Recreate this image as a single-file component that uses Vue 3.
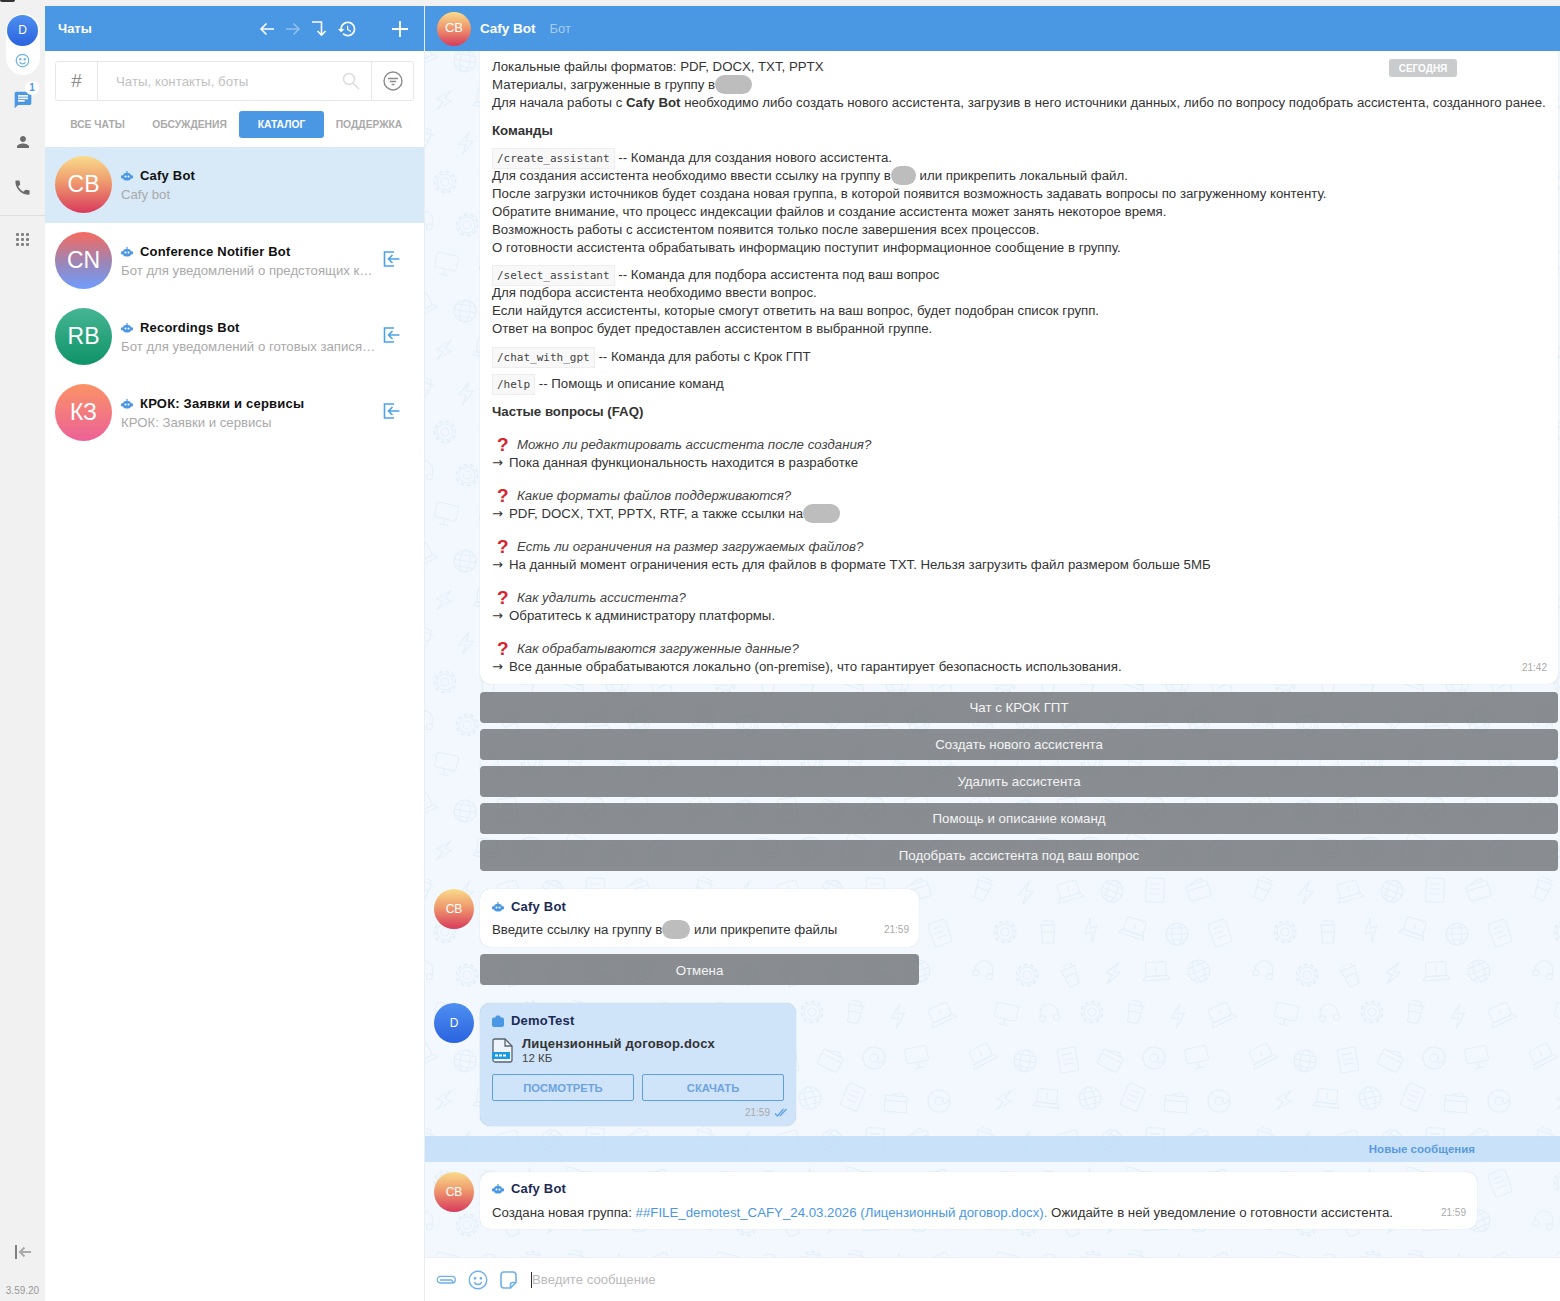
<script setup>
const tabs = [
  { label: "Все чаты" },
  { label: "Обсуждения" },
  { label: "Каталог", active: true },
  { label: "Поддержка" },
];

const chats = [
  { id: 1, initials: "CB", name: "Cafy Bot", sub: "Cafy bot", grad: "grad-cb", active: true },
  { id: 2, initials: "CN", name: "Conference Notifier Bot", sub: "Бот для уведомлений о предстоящих к…", grad: "grad-cn" },
  { id: 3, initials: "RB", name: "Recordings Bot", sub: "Бот для уведомлений о готовых запися…", grad: "grad-rb" },
  { id: 4, initials: "КЗ", name: "КРОК: Заявки и сервисы", sub: "КРОК: Заявки и сервисы", grad: "grad-kz" },
];

const faq = [
  { q: "Можно ли редактировать ассистента после создания?", a: "Пока данная функциональность находится в разработке" },
  { q: "Какие форматы файлов поддерживаются?", a: "PDF, DOCX, TXT, PPTX, RTF, а также ссылки на", pill: true },
  { q: "Есть ли ограничения на размер загружаемых файлов?", a: "На данный момент ограничения есть для файлов в формате TXT. Нельзя загрузить файл размером больше 5МБ" },
  { q: "Как удалить ассистента?", a: "Обратитесь к администратору платформы." },
  { q: "Как обрабатываются загруженные данные?", a: "Все данные обрабатываются локально (on-premise), что гарантирует безопасность использования." },
];

const buttons = [
  "Чат с КРОК ГПТ",
  "Создать нового ассистента",
  "Удалить ассистента",
  "Помощь и описание команд",
  "Подобрать ассистента под ваш вопрос",
];

// фон чата: раскладываем значки по сетке с небольшим разбросом
const doodleNames = ["laptop", "gear", "at", "globe", "cup", "screen", "note", "bolt", "headset", "wallet"];
const doodles = [];
for (let row = 0; row < 6; row++) {
  for (let col = 0; col < 6; col++) {
    const x = 4 + col * 43 + (row % 2) * 18 + ((col * 7 + row * 11) % 7);
    const y = 4 + row * 41 + ((col * 5 + row * 3) % 6);
    const angle = ((col * 37 + row * 53) % 56) - 28;
    const name = doodleNames[(col * 3 + row * 7) % doodleNames.length];
    doodles.push({ id: `${row}-${col}`, href: `#d-${name}`, transform: `translate(${x} ${y}) rotate(${angle} 13 13)` });
  }
}
</script>

<template>
  <div class="page">
    <div class="topstrip"><span class="topmark"></span></div>
    <div class="layout">
      <!-- левая полоса -->
      <nav class="rail">
        <div class="me">
          <div class="me-ava">D</div>
          <svg class="me-smile" width="15" height="15" viewBox="0 0 24 24" fill="none" stroke="#6fb0ea" stroke-width="2">
            <circle cx="12" cy="12" r="10" />
            <circle cx="8.5" cy="10" r="1" fill="#6fb0ea" />
            <circle cx="15.5" cy="10" r="1" fill="#6fb0ea" />
            <path d="M7.5 14.5c1 2 2.7 3 4.5 3s3.5-1 4.5-3" />
          </svg>
        </div>
        <div class="rail-item rail-chat">
          <svg width="20" height="20" viewBox="0 0 24 24" fill="#4a97e3">
            <path d="M20 2H4c-1.100 0-2 .9-2 2v18l4-4h14c1.100 0 2-.9 2-2V4c0-1.100-.9-2-2-2zM6 9h12v2H6V9zm8 5H6v-2h8v2zm4-6H6V6h12v2z" />
          </svg>
          <span class="rail-badge">1</span>
        </div>
        <div class="rail-item rail-person">
          <svg width="18" height="18" viewBox="0 0 24 24" fill="#6b6b6b">
            <path d="M12 12c2.210 0 4-1.790 4-4s-1.790-4-4-4-4 1.790-4 4 1.790 4 4 4zm0 2c-2.670 0-8 1.340-8 4v2h16v-2c0-2.660-5.330-4-8-4z" />
          </svg>
        </div>
        <div class="rail-item rail-phone">
          <svg width="19" height="19" viewBox="0 0 24 24" fill="#6b6b6b">
            <path d="M6.620 10.790c1.440 2.830 3.760 5.140 6.590 6.590l2.200-2.200c.27-.27.67-.36 1.020-.24 1.120.37 2.330.57 3.570.57.55 0 1 .45 1 1V20c0 .55-.45 1-1 1-9.390 0-17-7.610-17-17 0-.55.45-1 1-1h3.500c.55 0 1 .45 1 1 0 1.250.2 2.450.57 3.570.11.35.03.74-.25 1.020l-2.200 2.200z" />
          </svg>
        </div>
        <div class="rail-line"></div>
        <div class="rail-grid">
          <i v-for="n in 9" :key="n"></i>
        </div>
        <div class="rail-spacer"></div>
        <svg class="rail-collapse" width="18" height="14" viewBox="0 0 18 14" fill="none" stroke="#aaa" stroke-width="2">
          <path d="M2 0v14" stroke="#808080" />
          <path d="M17 7H6M10.500 2.500 6 7l4.500 4.500" />
        </svg>
        <div class="version">3.59.20</div>
      </nav>

      <!-- список чатов -->
      <aside class="side">
        <header class="side-head">
          <span class="side-title">Чаты</span>
          <div class="side-tools">
            <svg width="16" height="14" viewBox="0 0 16 14" fill="none" stroke="#fff" stroke-width="1.600">
              <path d="M15 7H2M7.500 1.500 2 7l5.500 5.500" />
            </svg>
            <svg width="16" height="14" viewBox="0 0 16 14" fill="none" stroke="#8fc0ee" stroke-width="1.600">
              <path d="M1 7h13M8.500 1.500 14 7l-5.500 5.500" />
            </svg>
            <svg width="16" height="17" viewBox="0 0 16 17" fill="none" stroke="#fff" stroke-width="1.600">
              <path d="M1 2h9.500v13M6.500 11l4 4.200 4-4.200" />
            </svg>
            <svg width="20" height="20" viewBox="0 0 24 24" fill="#fff">
              <path d="M13 3c-4.970 0-9 4.030-9 9H1l3.890 3.890.07.14L9 12H6c0-3.870 3.130-7 7-7s7 3.130 7 7-3.130 7-7 7c-1.930 0-3.680-.79-4.940-2.060l-1.420 1.420C8.270 19.990 10.510 21 13 21c4.970 0 9-4.030 9-9s-4.030-9-9-9zm-1 5v5l4.280 2.540.72-1.210-3.500-2.080V8H12z" />
            </svg>
            <svg class="tool-plus" width="16" height="16" viewBox="0 0 16 16" fill="none" stroke="#fff" stroke-width="1.800">
              <path d="M8 0v16M0 8h16" />
            </svg>
          </div>
        </header>

        <div class="search">
          <div class="search-hash">#</div>
          <div class="search-field">
            <span class="search-ph">Чаты, контакты, боты</span>
            <svg width="18" height="18" viewBox="0 0 18 18" fill="none" stroke="#dcdcdc" stroke-width="1.500">
              <circle cx="7" cy="7" r="5.500" />
              <path d="m11 11 6 6" />
            </svg>
          </div>
          <div class="search-filter">
            <svg width="20" height="20" viewBox="0 0 20 20" fill="none" stroke="#8c8c8c" stroke-width="1.400">
              <circle cx="10" cy="10" r="9" />
              <path d="M5 7.500h10M6.800 10.500h6.400M8.600 13.500h2.800" />
            </svg>
          </div>
        </div>

        <div class="tabs">
          <span v-for="t in tabs" :key="t.label" class="tab" :class="{ on: t.active }">{{ t.label }}</span>
        </div>

        <div class="chatlist">
          <div v-for="c in chats" :key="c.id" class="chat" :class="{ on: c.active }">
            <div class="chat-ava" :class="c.grad">{{ c.initials }}</div>
            <div class="chat-body">
              <div class="chat-name">
                <svg class="bot" width="12" height="10" viewBox="0 0 12 10">
                  <use href="#bot-head" />
                </svg>
                <span>{{ c.name }}</span>
              </div>
              <div class="chat-sub">{{ c.sub }}</div>
            </div>
            <svg v-if="!c.active" class="chat-join" width="17" height="16" viewBox="0 0 17 16" fill="none" stroke="#4aa3e8" stroke-width="1.600">
              <path d="M11 1H1.500v14H11M16.500 8H5.500M9.500 4 5.500 8l4 4" />
            </svg>
          </div>
        </div>
      </aside>

      <!-- чат -->
      <main class="conv">
        <header class="conv-head">
          <div class="ava ava-small grad-cb">CB</div>
          <span class="conv-name">Cafy Bot</span>
          <span class="conv-status">Бот</span>
        </header>

        <div class="feed">
          <svg class="doodles" width="100%" height="100%">
            <defs>
              <g id="bot-head">
                <rect x="2" y="2" width="8" height="7.500" rx="3" fill="#4a97e3" />
                <rect x="0" y="4.200" width="2.500" height="3.200" rx="1" fill="#4a97e3" />
                <rect x="9.500" y="4.200" width="2.500" height="3.200" rx="1" fill="#4a97e3" />
                <rect x="5.400" y="0" width="1.200" height="3" fill="#4a97e3" />
                <circle cx="4.500" cy="5.500" r="1" fill="#fff" />
                <circle cx="7.500" cy="5.500" r="1" fill="#fff" />
              </g>
              <g id="d-laptop"><rect x="3" y="3" width="20" height="14" rx="2" /><path d="M0 21h26l-2-4H2zM13 7v6" /></g>
              <g id="d-gear"><circle cx="13" cy="13" r="4" /><circle cx="13" cy="13" r="8" /><circle cx="13" cy="13" r="10.500" stroke-dasharray="4 2.600" stroke-width="2" /></g>
              <g id="d-at"><circle cx="13" cy="13" r="11" /><circle cx="13" cy="13" r="4" /><path d="M17 9v6c0 3 5 3 5-2" /></g>
              <g id="d-globe"><circle cx="13" cy="13" r="11" /><ellipse cx="13" cy="13" rx="5" ry="11" /><path d="M2 13h22M4 7h18M4 19h18" /></g>
              <g id="d-cup"><path d="M6 7h14l-2 18H8zM4 7h18M8 3h10v4M7 14h12" /></g>
              <g id="d-screen"><rect x="2" y="3" width="22" height="15" rx="2" /><path d="M8 24h10M13 18v6" /></g>
              <g id="d-note"><rect x="4" y="1" width="18" height="24" rx="2" /><path d="M8 7h10M8 12h10M8 17h10" /></g>
              <g id="d-bolt"><path d="M16 1 6 15h7l-3 10 10-14h-7z" /></g>
              <g id="d-headset"><path d="M4 15v-2a9 9 0 0 1 18 0v2" /><circle cx="6" cy="18" r="3" /><circle cx="20" cy="18" r="3" /></g>
              <g id="d-wallet"><rect x="2" y="7" width="22" height="16" rx="2" /><path d="M2 12h22M6 7l12-4 2 4" /></g>
              <pattern id="doodle" x="-20" y="-12" width="280" height="250" patternUnits="userSpaceOnUse">
                <g fill="none" stroke="#e4eff9" stroke-width="1">
                  <use v-for="d in doodles" :key="d.id" :href="d.href" :transform="d.transform" />
                </g>
              </pattern>
            </defs>
            <rect width="100%" height="100%" fill="url(#doodle)" />
          </svg>

          <span class="today">СЕГОДНЯ</span>

          <div class="bubble bubble-main">
            <p>
              Локальные файлы форматов: PDF, DOCX, TXT, PPTX<br />
              Материалы, загруженные в группу в<span class="blur w37"></span><br />
              Для начала работы с <b>Cafy Bot</b> необходимо либо создать нового ассистента, загрузив в него источники данных, либо по вопросу подобрать ассистента, созданного ранее.
            </p>
            <p class="cmd-title"><b>Команды</b></p>
            <p>
              <code>/create_assistant</code> -- Команда для создания нового ассистента.<br />
              Для создания ассистента необходимо ввести ссылку на группу в<span class="blur w25"></span> или прикрепить локальный файл.<br />
              После загрузки источников будет создана новая группа, в которой появится возможность задавать вопросы по загруженному контенту.<br />
              Обратите внимание, что процесс индексации файлов и создание ассистента может занять некоторое время.<br />
              Возможность работы с ассистентом появится только после завершения всех процессов.<br />
              О готовности ассистента обрабатывать информацию поступит информационное сообщение в группу.
            </p>
            <p>
              <code>/select_assistant</code> -- Команда для подбора ассистента под ваш вопрос<br />
              Для подбора ассистента необходимо ввести вопрос.<br />
              Если найдутся ассистенты, которые смогут ответить на ваш вопрос, будет подобран список групп.<br />
              Ответ на вопрос будет предоставлен ассистентом в выбранной группе.
            </p>
            <p><code>/chat_with_gpt</code> -- Команда для работы с Крок ГПТ</p>
            <p><code>/help</code> -- Помощь и описание команд</p>
            <p class="faq-title"><b>Частые вопросы (FAQ)</b></p>
            <div v-for="item in faq" :key="item.q" class="faq">
              <div class="faq-q"><span class="faq-mark">?</span><em>{{ item.q }}</em></div>
              <div><span class="faq-arrow">→</span>{{ item.a }}<span v-if="item.pill" class="blur w37"></span></div>
            </div>
            <span class="time time-main">21:42</span>
          </div>

          <div class="kb">
            <button v-for="b in buttons" :key="b" class="kb-btn">{{ b }}</button>
          </div>

          <div class="msg msg-first">
            <div class="ava grad-cb">CB</div>
            <div class="bubble bubble-short">
              <div class="author">
                <svg width="12" height="10" viewBox="0 0 12 10"><use href="#bot-head" /></svg>
                Cafy Bot
              </div>
              <div class="text-row">
                <span>Введите ссылку на группу в<span class="blur w28"></span> или прикрепите файлы</span>
                <span class="time">21:59</span>
              </div>
            </div>
          </div>
          <button class="kb-btn cancel">Отмена</button>

          <div class="msg msg-file">
            <div class="ava grad-d">D</div>
            <div class="bubble bubble-file">
              <div class="author">
                <svg width="12" height="12" viewBox="0 0 12 12" fill="#4a97e3">
                  <path d="M2 2.500h1.500V2A1.500 1.500 0 0 1 5 .5h2A1.500 1.500 0 0 1 8.500 2v.5H10a2 2 0 0 1 2 2V10a2 2 0 0 1-2 2H2a2 2 0 0 1-2-2V4.500a2 2 0 0 1 2-2z" />
                </svg>
                DemoTest
              </div>
              <div class="file">
                <svg width="21" height="25" viewBox="0 0 21 25" fill="none">
                  <path d="M1 3a2 2 0 0 1 2-2h10l7 7v14a2 2 0 0 1-2 2H3a2 2 0 0 1-2-2z" fill="#eef4fb" stroke="#5b6470" stroke-width="1.300" />
                  <path d="M13 1v7h7" stroke="#5b6470" stroke-width="1.300" />
                  <rect x="0" y="14" width="18" height="7" fill="#1e9ae0" />
                  <path d="M3 17.500h12" stroke="#fff" stroke-width="2" stroke-dasharray="3 1" />
                </svg>
                <div>
                  <div class="file-name">Лицензионный договор.docx</div>
                  <div class="file-size">12 КБ</div>
                </div>
              </div>
              <div class="file-btns">
                <button class="file-btn">Посмотреть</button>
                <button class="file-btn">Скачать</button>
              </div>
              <div class="file-meta">
                <span class="time">21:59</span>
                <svg width="14" height="9" viewBox="0 0 14 9" fill="none" stroke="#5fa0e2" stroke-width="1.200">
                  <path d="M1 5.500 3.500 8 9.500 1M6 8l6.500-7" />
                </svg>
              </div>
            </div>
          </div>

          <div class="newbar"><span>Новые сообщения</span></div>

          <div class="msg">
            <div class="ava grad-cb">CB</div>
            <div class="bubble bubble-last">
              <div class="author">
                <svg width="12" height="10" viewBox="0 0 12 10"><use href="#bot-head" /></svg>
                Cafy Bot
              </div>
              <div class="text-row">
                <span>Создана новая группа: <a>##FILE_demotest_CAFY_24.03.2026 (Лицензионный договор.docx).</a> Ожидайте в ней уведомление о готовности ассистента.</span>
                <span class="time">21:59</span>
              </div>
            </div>
          </div>
        </div>

        <footer class="composer">
          <svg width="20" height="10" viewBox="0 0 20 10" fill="none" stroke="#6fb0ea" stroke-width="1.300">
            <path d="M4 5h11a1.500 1.500 0 0 1 0 3H4.500a3.300 3.300 0 0 1 0-6.600H16a3.300 3.300 0 0 1 0 6.600" />
          </svg>
          <svg width="20" height="20" viewBox="0 0 24 24" fill="none" stroke="#6fb0ea" stroke-width="1.700">
            <circle cx="12" cy="12" r="10.500" />
            <circle cx="8.500" cy="10" r=".8" fill="#6fb0ea" />
            <circle cx="15.500" cy="10" r=".8" fill="#6fb0ea" />
            <path d="M7.500 14.500c1 2 2.700 3 4.500 3s3.500-1 4.500-3" />
          </svg>
          <svg width="17" height="18" viewBox="0 0 17 18" fill="none" stroke="#6fb0ea" stroke-width="1.600">
            <path d="M10.500 17H4a3 3 0 0 1-3-3V4a3 3 0 0 1 3-3h9a3 3 0 0 1 3 3v7.500zM10.500 17v-3.500a2 2 0 0 1 2-2H16" />
          </svg>
          <div class="composer-ph"><i class="caret"></i>Введите сообщение</div>
        </footer>
      </main>
    </div>
  </div>
</template>

<style scoped>
.page {
  width: 1560px;
  height: 1301px;
  overflow: hidden;
  display: flex;
  flex-direction: column;
  background: #f1f1f1;
  font-family: "Liberation Sans", Arial, sans-serif;
  font-size: 13.26px;
  color: #333;
}
.topstrip {
  height: 6px;
  flex: none;
}
.topmark {
  display: block;
  width: 15px;
  height: 2px;
  background: #333;
  border-radius: 0 0 4px 4px;
}
.layout {
  flex: 1;
  min-height: 0;
  display: flex;
}

/* левая полоса */
.rail {
  width: 45px;
  flex: none;
  display: flex;
  flex-direction: column;
  align-items: center;
  background: #f1f1f1;
}
.me {
  width: 34px;
  height: 61px;
  margin-top: 8px;
  background: #fff;
  border-radius: 17px;
  display: flex;
  flex-direction: column;
  align-items: center;
}
.me-ava {
  width: 31px;
  height: 31px;
  margin-top: 1px;
  border-radius: 50%;
  background: linear-gradient(#4f8ff0, #2a63e0);
  color: #fff;
  font-size: 12px;
  line-height: 31px;
  text-align: center;
}
.me-smile {
  margin-top: 7px;
}
.rail-item {
  height: 42px;
  width: 100%;
  display: flex;
  align-items: center;
  justify-content: center;
  position: relative;
}
.rail-chat {
  margin-top: 4px;
}
.rail-phone {
  margin-top: 3px;
}
.rail-badge {
  position: absolute;
  top: 2px;
  right: 6px;
  width: 14px;
  height: 14px;
  border-radius: 50%;
  background: #fff;
  color: #4a97e3;
  font-size: 10px;
  font-weight: 700;
  line-height: 14px;
  text-align: center;
}
.rail-line {
  width: 100%;
  height: 1px;
  background: #dedede;
  margin-top: 7px;
}
.rail-grid {
  display: grid;
  grid-template-columns: repeat(3, 3px);
  gap: 2px;
  margin-top: 17px;
}
.rail-grid i {
  width: 3px;
  height: 3px;
  background: #808080;
  border-radius: 1px;
}
.rail-spacer {
  flex: 1;
}
.rail-collapse {
  margin-bottom: 26px;
}
.version {
  font-size: 10px;
  color: #999;
  margin-bottom: 5px;
}

/* список чатов */
.side {
  width: 379px;
  flex: none;
  background: #fff;
  border-right: 1px solid #e9eef3;
}
.side-head {
  height: 45px;
  background: #4a97e3;
  display: flex;
  align-items: center;
  padding: 0 16px 0 13px;
}
.side-title {
  color: #fff;
  font-size: 13px;
  font-weight: 700;
}
.side-tools {
  margin-left: auto;
  display: flex;
  align-items: center;
  gap: 10px;
}
.tool-plus {
  margin-left: 25px;
}
.search {
  display: flex;
  height: 38px;
  margin: 10px 10px 0;
  border: 1px solid #e7e7e7;
  border-radius: 3px;
}
.search-hash {
  width: 41px;
  border-right: 1px solid #e7e7e7;
  color: #8c8c8c;
  font-size: 19px;
  line-height: 38px;
  text-align: center;
}
.search-field {
  flex: 1;
  display: flex;
  align-items: center;
  justify-content: space-between;
  padding: 0 11px 0 18px;
}
.search-ph {
  font-size: 13.3px;
  color: #c2c2c2;
}
.search-filter {
  width: 41px;
  border-left: 1px solid #e7e7e7;
  display: flex;
  align-items: center;
  justify-content: center;
}
.tabs {
  display: grid;
  grid-template-columns: 85px 99px 85px 90px;
  margin: 10px 0 0 10px;
  height: 27px;
}
.tab {
  font-size: 10.3px;
  font-weight: 700;
  color: #aaa;
  text-transform: uppercase;
  line-height: 27px;
  text-align: center;
  border-radius: 3px;
}
.tab.on {
  background: #4a97e3;
  color: #fff;
}
.chatlist {
  margin-top: 9px;
}
.chat {
  height: 76px;
  box-sizing: border-box;
  display: flex;
  align-items: center;
  padding: 0 24px 1px 10px;
}
.chat.on {
  background: #d8e9f8;
}
.chat-ava {
  width: 57px;
  height: 57px;
  flex: none;
  border-radius: 50%;
  color: #fff;
  font-size: 23px;
  line-height: 57px;
  text-align: center;
}
.chat-body {
  flex: 1;
  min-width: 0;
  margin: 1px 3px 0 9px;
}
.chat-name {
  display: flex;
  align-items: center;
  gap: 7px;
  color: #111;
  font-size: 13px;
  font-weight: 700;
  letter-spacing: 0.2px;
  line-height: 18px;
}
.chat-name .bot {
  flex: none;
}
.chat-sub {
  color: #aaa;
  font-size: 13.2px;
  line-height: 19px;
  white-space: nowrap;
}
.chat-join {
  flex: none;
  margin-top: -4px;
}
.grad-cb {
  background: linear-gradient(#f9dc8a, #ef9a6e 45%, #d83a5c);
}
.grad-cn {
  background: linear-gradient(#f76a5e, #9a86b8 55%, #6f9dff);
}
.grad-rb {
  background: linear-gradient(#46b593, #0f9368);
}
.grad-kz {
  background: linear-gradient(#fb9366, #ec6198);
}
.grad-d {
  background: linear-gradient(#4f8ff0, #2a63e0);
}

/* чат */
.conv {
  flex: 1;
  min-width: 0;
  display: flex;
  flex-direction: column;
  background: #fff;
}
.conv-head {
  height: 45px;
  flex: none;
  background: #4a97e3;
  display: flex;
  align-items: center;
  padding-left: 12px;
  color: #fff;
}
.ava {
  width: 40px;
  height: 40px;
  flex: none;
  border-radius: 50%;
  color: #fff;
  font-size: 12px;
  line-height: 40px;
  text-align: center;
}
.ava-small {
  width: 34px;
  height: 34px;
  line-height: 32px;
  font-size: 13px;
}
.conv-name {
  margin-left: 9px;
  font-size: 13.5px;
  font-weight: 700;
}
.conv-status {
  margin-left: 14px;
  font-size: 13px;
  color: #a9cdf1;
}
.feed {
  flex: 1;
  min-height: 0;
  position: relative;
  background: #f2f8fd;
  overflow: hidden;
}
.doodles {
  position: absolute;
  inset: 0;
}
.today {
  position: absolute;
  top: 8px;
  left: 964px;
  z-index: 2;
  width: 68px;
  height: 18px;
  border-radius: 3px;
  background: #c9cbcd;
  color: #fff;
  font-size: 10px;
  font-weight: 700;
  line-height: 19px;
  text-align: center;
}
.bubble {
  position: relative;
  background: #fff;
  box-sizing: border-box;
  border-radius: 10px;
  box-shadow: 0 0 1px rgba(120, 140, 160, 0.45);
}
.bubble-main {
  margin: 0 2px 0 55px;
  height: 633px;
  padding: 7px 12px 0;
  line-height: 18px;
  border-radius: 0 0 10px 10px;
}
.bubble-main p {
  margin: 0 0 9.6px;
}
.bubble-main .cmd-title {
  margin-bottom: 9px;
}
.bubble-main .faq-title {
  margin-bottom: 14.6px;
}
code {
  padding: 3px 4px;
  background: #f8f8f8;
  border: 1px solid #eee;
  color: #444;
  font-family: "DejaVu Sans Mono", monospace;
  font-size: 11px;
  line-height: 1;
}
.blur {
  display: inline-block;
  height: 19px;
  margin: -4px 0;
  border-radius: 10px;
  background: #bdbdbd;
  vertical-align: -1px;
}
.w25 { width: 25px; }
.w28 { width: 28px; }
.w37 { width: 37px; }
.faq {
  margin-bottom: 15px;
}
.faq-q {
  display: flex;
  align-items: center;
  padding-left: 5px;
  height: 18px;
}
.faq-q em {
  color: #444;
}
.faq-mark {
  width: 20px;
  color: #d8242c;
  font-size: 19px;
  font-weight: 700;
}
.faq-arrow {
  display: inline-block;
  width: 17px;
  color: #333;
  font-family: "DejaVu Sans", sans-serif;
  font-size: 13px;
  line-height: 1;
}
.time {
  font-size: 10px;
  color: #aaa;
}
.time-main {
  position: absolute;
  right: 11px;
  bottom: 7px;
}
.kb {
  display: flex;
  flex-direction: column;
  gap: 6px;
  margin: 8px 2px 0 55px;
}
.kb-btn {
  height: 31px;
  border: 0;
  padding: 0;
  border-radius: 4px;
  background: rgba(110, 114, 118, 0.8);
  color: #f4f4f4;
  font-family: inherit;
  font-size: 13.3px;
  position: relative;
}
.msg {
  display: flex;
  gap: 6px;
  align-items: flex-start;
  padding-left: 9px;
  position: relative;
}
.msg-first {
  margin-top: 18px;
}
.msg-file {
  margin-top: 18px;
}
.author {
  display: flex;
  align-items: center;
  gap: 7px;
  color: #1c2b55;
  font-size: 13px;
  font-weight: 700;
  letter-spacing: 0.2px;
  line-height: 16px;
}
.text-row {
  display: flex;
  justify-content: space-between;
  align-items: flex-end;
  line-height: 18px;
  margin-top: 6px;
  color: #333;
}
.bubble-short {
  width: 439px;
  height: 58px;
  padding: 10px 10px 0 12px;
}
.bubble-last {
  width: 997px;
  height: 57px;
  padding: 9px 11px 0 12px;
}
.bubble-last .text-row {
  margin-top: 7px;
}
.cancel {
  display: block;
  width: 439px;
  margin: 7px 0 0 55px;
  padding-top: 1px;
}
.bubble-file {
  width: 316px;
  height: 123px;
  padding: 10px 12px 0;
  background: #cfe3f9;
  box-shadow: 0 0 1px rgba(90, 130, 180, 0.6);
}
.file {
  display: flex;
  align-items: center;
  gap: 9px;
  margin-top: 6px;
}
.file-name {
  padding-top: 1px;
  color: #333;
  font-size: 13px;
  font-weight: 700;
  letter-spacing: 0.2px;
  line-height: 16px;
}
.file-size {
  margin-top: -1px;
  color: #444;
  font-size: 11.5px;
  line-height: 14px;
}
.file-btns {
  display: flex;
  gap: 8px;
  margin-top: 9px;
}
.file-btn {
  flex: 1;
  height: 27px;
  padding: 0;
  border: 1px solid #5fa0e2;
  border-radius: 2px;
  background: transparent;
  color: #6ea3dd;
  font-family: inherit;
  font-size: 11.2px;
  font-weight: 700;
  text-transform: uppercase;
}
.file-meta {
  display: flex;
  justify-content: flex-end;
  align-items: center;
  gap: 4px;
  margin-top: 6px;
  margin-right: -4px;
}
.newbar {
  position: relative;
  margin-top: 10px;
  height: 26px;
  background: rgba(190, 220, 248, 0.8);
  color: #5a9ae0;
  font-size: 11.5px;
  font-weight: 700;
  line-height: 26px;
  text-align: right;
  padding-right: 85px;
  margin-bottom: 10px;
}
.bubble-last a {
  color: #4a97e3;
}
.composer {
  height: 44px;
  flex: none;
  display: flex;
  align-items: center;
  gap: 12px;
  padding-left: 11px;
  background: #fff;
  border-top: 1px solid #eef1f4;
  box-sizing: border-box;
}
.composer-ph {
  display: flex;
  align-items: center;
  margin-left: 2px;
  color: #bbb;
  font-size: 13.2px;
}
.caret {
  width: 1px;
  height: 16px;
  background: #333;
}
</style>
